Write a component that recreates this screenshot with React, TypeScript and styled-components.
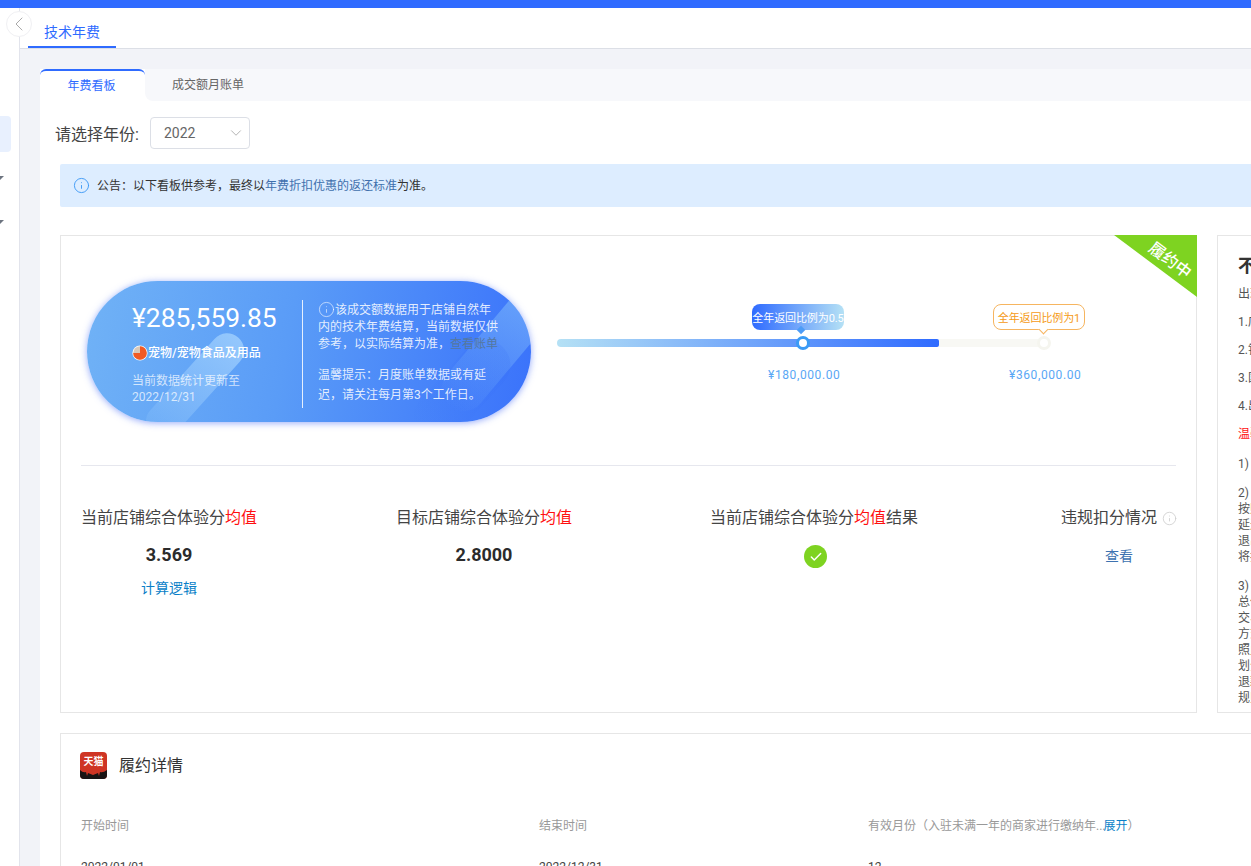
import * as React from "react"
import styled, { createGlobalStyle } from "styled-components"
import { Check, ChevronDown, ChevronLeft, Info } from "lucide-react"

const GlobalStyle = createGlobalStyle`
    html, body {
        margin: 0;
        padding: 0;
        background: #fff;
    }

    body {
        font-family: Roboto, "Noto Sans CJK SC", sans-serif;
        font-size: 12px;
        color: #333;
    }

    * {
        box-sizing: border-box;
    }
`

const Page = styled.div`
    position: relative;
    display: flex;
    flex-direction: column;
    width: 1251px;
    height: 866px;
    overflow: hidden;
`

const TopBar = styled.div`
    flex: none;
    height: 8px;
    background: #2f6bff;
`

const Body = styled.div`
    flex: 1;
    display: flex;
    min-height: 0;
`

const Sidebar = styled.aside`
    flex: none;
    display: flex;
    flex-direction: column;
    width: 20px;
    padding-top: 108px;
    background: #fff;
    border-right: 1px solid #e2e4ec;
    overflow: hidden;
`

const SideActive = styled.div`
    width: 11px;
    height: 36px;
    background: #e8f0fe;
    border-radius: 0 4px 4px 0;
`

const SideCaret = styled.div`
    width: 0;
    height: 0;
    margin-top: 24px;
    margin-bottom: 16px;
    margin-left: -4px;
    border-left: 4px solid transparent;
    border-right: 4px solid transparent;
    border-top: 4px solid #6d7480;
`

const CollapseButton = styled.button`
    position: absolute;
    left: 6px;
    top: 11px;
    display: flex;
    align-items: center;
    justify-content: center;
    width: 26px;
    height: 26px;
    padding: 0;
    background: #fff;
    border: 1px solid #f0f0f3;
    border-radius: 50%;
    color: #aaa;
`

const Main = styled.main`
    flex: 1;
    display: flex;
    flex-direction: column;
    min-width: 0;
    overflow: hidden;
`

const TabBar = styled.div`
    flex: none;
    height: 41px;
    padding-left: 8px;
    background: #fff;
    border-bottom: 1px solid #dcdfe6;
`

const PageTab = styled.div`
    width: 88px;
    height: 40px;
    padding: 15px 0 0 16px;
    font-size: 14px;
    line-height: 18px;
    color: #2f6bff;
    border-bottom: 2px solid #2f6bff;
`

const Content = styled.div`
    flex: 1;
    padding: 20px 0 0 20px;
    background: #f2f3f8;
    overflow: hidden;
`

const Panel = styled.div`
    width: 1500px;
    min-height: 900px;
    background: #fff;
`

const TabsRow = styled.div`
    display: flex;
    height: 32px;
`

const ActiveTab = styled.div`
    flex: none;
    width: 105px;
    padding-right: 2px;
    line-height: 30px;
    text-align: center;
    color: #2f6bff;
    background: #fff;
    border-top: 2px solid #2f6bff;
    border-radius: 6px 6px 0 0;
`

const RestTabs = styled.div`
    flex: 1;
    padding-left: 27px;
    line-height: 33px;
    color: #666;
    background: #f7f8fb;
    border-bottom-left-radius: 8px;
`

const FilterRow = styled.div`
    display: flex;
    align-items: center;
    gap: 11px;
    height: 32px;
    margin: 16px 0 15px 15px;
`

const FilterLabel = styled.label`
    font-size: 16px;
    color: #444;
`

const SelectBox = styled.div`
    display: flex;
    align-items: center;
    justify-content: space-between;
    width: 100px;
    height: 32px;
    padding: 0 4px 0 13px;
    font-size: 14px;
    color: #666;
    border: 1px solid #dcdfe6;
    border-radius: 4px;
`

const Notice = styled.div`
    display: flex;
    align-items: center;
    gap: 7px;
    height: 43px;
    margin-left: 20px;
    padding: 0 0 1px 13px;
    color: #333;
    background: #ddedff;
    border-radius: 2px;
`

const NoticeText = styled.span`
    margin-bottom: 2px;
`

const NoticeLink = styled.span`
    color: #3f70ad;
`

const Cards = styled.div`
    display: flex;
    gap: 20px;
    height: 478px;
    margin: 28px 0 20px 20px;
`

const Card = styled.section`
    position: relative;
    border: 1px solid #e6e6e6;
    background: #fff;
`

const OverviewCard = styled(Card)`
    flex: none;
    width: 1137px;
`

const Ribbon = styled.div`
    position: absolute;
    top: -1px;
    right: -1px;
    display: flex;
    align-items: center;
    justify-content: center;
    width: 83px;
    height: 62px;
    padding: 0 0 15px 31px;
    background: #7ed321;
    clip-path: polygon(0 0, 100% 0, 100% 100%);
`

const RibbonText = styled.span`
    font-size: 16px;
    font-weight: 500;
    color: #fff;
    white-space: nowrap;
    transform: rotate(37deg);
`

const Hero = styled.div`
    display: flex;
    align-items: flex-start;
    margin: 0 20px;
    padding: 45px 0 43px 6px;
    border-bottom: 1px solid #e6e7ee;
`

const Pill = styled.div`
    position: relative;
    flex: none;
    display: flex;
    width: 444px;
    height: 141px;
    padding: 19px 31px 14px 45px;
    color: #fff;
    background: linear-gradient(100deg, #70b2f6 0%, #5a9cf7 45%, #3a72fb 100%);
    border-radius: 71px;
    box-shadow: 0 1px 7px rgba(62, 100, 245, 0.55);
`

const PillArt = styled.div`
    position: absolute;
    inset: 0;
    border-radius: 71px;
    overflow: hidden;
`

const Stripe = styled.div<{ $x: number; $y: number; $len: number; $wide: number; $angle: number; $from: string; $to: string }>`
    position: absolute;
    left: ${p => p.$x}px;
    top: ${p => p.$y}px;
    width: ${p => p.$wide}px;
    height: ${p => p.$len}px;
    background: linear-gradient(180deg, ${p => p.$from}, ${p => p.$to});
    border-radius: ${p => p.$wide / 2}px;
    transform: rotate(${p => p.$angle}deg);
`

const PillLeft = styled.div`
    position: relative;
    flex: none;
    width: 170px;
`

const Amount = styled.div`
    font-size: 26.4px;
    line-height: 36px;
    white-space: nowrap;
`

const Category = styled.div`
    display: flex;
    align-items: center;
    margin-top: 8px;
    font-weight: 500;
    line-height: 18px;
    white-space: nowrap;
`

const UpdateNote = styled.div`
    width: 116px;
    margin-top: 11px;
    line-height: 16px;
    color: rgba(255, 255, 255, 0.72);
`

const PillDivider = styled.div`
    position: relative;
    flex: none;
    width: 1px;
    height: 108px;
    background: rgba(255, 255, 255, 0.85);
`

const PillRight = styled.div`
    position: relative;
    flex: 1;
    margin: 1px 0 0 15px;
    line-height: 17px;
    color: rgba(255, 255, 255, 0.85);
`

const InlineIcon = styled.span`
    display: inline-flex;
    vertical-align: -4px;
    color: rgba(255, 255, 255, 0.7);
`

const BillLink = styled.span`
    color: #55789f;
`

const Hint = styled.p`
    margin: 12px 0 0;
    line-height: 20px;
`

const SliderBlock = styled.div`
    position: relative;
    flex: none;
    width: 528px;
    height: 100px;
    margin: 23px 0 0 25px;
`

const Track = styled.div`
    display: flex;
    width: 487px;
    height: 8px;
    margin: 35px 0 0 1px;
`

const TrackFill = styled.div`
    flex: none;
    width: 382px;
    background: linear-gradient(90deg, #b5e1f5, #2f6bff);
    border-radius: 4px 2px 2px 4px;
`

const TrackRest = styled.div`
    flex: 1;
    background: #f8f8f4;
`

const Mark = styled.div<{ $at: number }>`
    position: absolute;
    top: 0;
    left: ${p => p.$at}px;
    width: 0;
`

const Tip = styled.div<{ $done?: boolean }>`
    position: absolute;
    top: 0;
    left: -51px;
    display: flex;
    align-items: center;
    justify-content: center;
    width: 92px;
    height: 26px;
    font-size: 11px;
    letter-spacing: -0.1px;
    white-space: nowrap;
    border-radius: 8px;
    color: ${p => (p.$done ? "#fff" : "#f59a16")};
    background: ${p => (p.$done ? "linear-gradient(90deg, #2f6bff, #b5e1f5)" : "#fff")};
    border: ${p => (p.$done ? "none" : "1px solid #f6b560")};

    &::after {
        content: "";
        position: absolute;
        left: 46px;
        bottom: ${p => (p.$done ? "-3px" : "-4px")};
        width: 6px;
        height: 6px;
        background: ${p => (p.$done ? "#4d9cf6" : "#fff")};
        border-right: ${p => (p.$done ? "none" : "1px solid #f6b560")};
        border-bottom: ${p => (p.$done ? "none" : "1px solid #f6b560")};
        transform: rotate(45deg);
    }
`

const Knob = styled.div<{ $done?: boolean }>`
    position: absolute;
    top: 32px;
    left: -7px;
    width: 14px;
    height: 14px;
    background: #fff;
    border: 3px solid ${p => (p.$done ? "#3a9bf5" : "#f5f5ef")};
    border-radius: 50%;
`

const MarkValue = styled.div`
    position: absolute;
    top: 63px;
    left: -35px;
    line-height: 16px;
    letter-spacing: 0.6px;
    color: #5aa7f5;
    white-space: nowrap;
`

const Metrics = styled.div`
    display: grid;
    grid-template-columns: 315px 314px 351px auto;
    margin: 0 20px;
    padding-top: 40px;
`

const Metric = styled.div`
    display: inline-flex;
    flex-direction: column;
    align-items: center;
    justify-self: start;
`

const MetricTitle = styled.div`
    display: flex;
    align-items: center;
    gap: 5px;
    font-size: 16px;
    line-height: 24px;
    color: #444;
    white-space: nowrap;
`

const Red = styled.span`
    color: #ff1010;
`

const MetricValue = styled.div`
    margin-top: 13px;
    font-size: 18px;
    font-weight: 700;
    line-height: 24px;
    color: #2b2b2b;
`

const MetricLink = styled.a<{ $muted?: boolean }>`
    margin-top: ${p => (p.$muted ? "15px" : "10px")};
    font-size: 14px;
    line-height: 22px;
    color: ${p => (p.$muted ? "#3d72b0" : "#0a7fc8")};
`

const OkMark = styled.div`
    display: flex;
    align-items: center;
    justify-content: center;
    width: 23px;
    height: 23px;
    margin: 15px 0 0 3px;
    color: #fff;
    background: #7ed321;
    border-radius: 50%;
`

const RulesCard = styled(Card)`
    flex: 1;
    padding: 18px 20px;
    overflow: hidden;
`

const RulesTitle = styled.h3`
    margin: 0 0 8px;
    font-size: 18px;
    font-weight: 700;
    line-height: 24px;
    color: #333;
`

const RuleText = styled.p`
    margin: 0 0 12px;
    line-height: 16px;
    color: #555;
`

const WarnText = styled(RuleText)`
    margin: 2px 0 14px;
    color: #ff1010;
`

const NoteText = styled(RuleText)`
    margin-bottom: 13px;
    white-space: pre-line;
`

const DetailCard = styled(Card)`
    margin-left: 20px;
    padding: 18px 19px;
    height: 200px;
`

const DetailHead = styled.div`
    display: flex;
    align-items: center;
    gap: 12px;
    height: 27px;
`

const DetailTitle = styled.div`
    padding-bottom: 3px;
    font-size: 16px;
    color: #333;
`

const TmallLogo = styled.div`
    flex: none;
    position: relative;
    width: 27px;
    height: 27px;
    padding-top: 3px;
    font-size: 10px;
    font-weight: 700;
    line-height: 13px;
    text-align: center;
    white-space: nowrap;
    color: #fff;
    background: #cf3524;
    border-radius: 4px;
    overflow: hidden;
`

const LogoFoot = styled.svg`
    position: absolute;
    left: 0;
    bottom: 0;
    display: block;
`

const DetailGrid = styled.div`
    display: grid;
    grid-template-columns: 458px 329px 1fr;
    row-gap: 29px;
    margin: 41px 0 0 1px;
    line-height: 12px;
`

const DetailLabel = styled.div`
    color: #999;
`

const DetailValue = styled.div`
    color: #444;
`

const DetailLink = styled.span`
    margin-left: -2px;
    color: #0a7fc8;
`

const rules = [
    "出现以下情形的，技术年费不予返还：",
    "1.店铺因违规被清退的；",
    "2.银行账户信息有误的；",
    "3.国家法律法规另有规定的；",
    "4.出现其他不符合规则的情形。"
]

const notes = [
    "1) 年费返还将于次年统一结算。",
    "2) 年费结算时间\n按照自然年度进行计算，\n延迟结算的情况请以通知为准，\n退出经营的商家\n将按规则结算。",
    "3) 年费折扣优惠\n总体比例按成交额计算，\n交易额不含退款部分，\n方式参考规则，\n照此执行，\n划分类目后，\n退款金额扣除，\n规则以公告为准。"
]

const PieIcon = () => (
    <svg width="16" height="16" viewBox="0 0 16 16">
        <circle cx="8" cy="8" r="7.6" fill="#fff" />
        <circle cx="8" cy="8" r="6.8" fill="#d9c8b8" />
        <path d="M8 1.2A6.8 6.8 0 1 1 1.2 8H8z" fill="#f15a24" />
    </svg>
)

export default function App() {
    return (
        <Page>
            <GlobalStyle />
            <TopBar />
            <Body>
                <Sidebar>
                    <SideActive />
                    <SideCaret />
                    <SideCaret />
                </Sidebar>
                <Main>
                    <TabBar>
                        <PageTab>技术年费</PageTab>
                    </TabBar>
                    <Content>
                        <Panel>
                            <TabsRow>
                                <ActiveTab>年费看板</ActiveTab>
                                <RestTabs>成交额月账单</RestTabs>
                            </TabsRow>
                            <FilterRow>
                                <FilterLabel>请选择年份:</FilterLabel>
                                <SelectBox>
                                    2022
                                    <ChevronDown size={18} strokeWidth={1} color="#999" />
                                </SelectBox>
                            </FilterRow>
                            <Notice>
                                <Info size={17} strokeWidth={1.3} color="#3b97f5" />
                                <NoticeText>
                                    公告：以下看板供参考，最终以<NoticeLink>年费折扣优惠的返还标准</NoticeLink>为准。
                                </NoticeText>
                            </Notice>
                            <Cards>
                                <OverviewCard>
                                    <Ribbon>
                                        <RibbonText>履约中</RibbonText>
                                    </Ribbon>
                                    <Hero>
                                        <Pill>
                                            <PillArt>
                                                <Stripe $x={91} $y={40} $wide={34} $len={130} $angle={42} $from="rgba(170,215,255,0.7)" $to="rgba(160,210,255,0.12)" />
                                                <Stripe $x={395} $y={-25} $wide={44} $len={170} $angle={40} $from="rgba(150,210,250,0.6)" $to="rgba(150,210,250,0)" />
                                                <Stripe $x={350} $y={50} $wide={50} $len={120} $angle={42} $from="rgba(45,100,245,0.12)" $to="rgba(45,100,245,0)" />
                                            </PillArt>
                                            <PillLeft>
                                                <Amount>¥285,559.85</Amount>
                                                <Category>
                                                    <PieIcon />
                                                    宠物/宠物食品及用品
                                                </Category>
                                                <UpdateNote>当前数据统计更新至2022/12/31</UpdateNote>
                                            </PillLeft>
                                            <PillDivider />
                                            <PillRight>
                                                <InlineIcon>
                                                    <Info size={17} strokeWidth={1.2} />
                                                </InlineIcon>
                                                该成交额数据用于店铺自然年内的技术年费结算，当前数据仅供参考，以实际结算为准，
                                                <BillLink>查看账单</BillLink>
                                                <Hint>温馨提示：月度账单数据或有延迟，请关注每月第3个工作日。</Hint>
                                            </PillRight>
                                        </Pill>
                                        <SliderBlock>
                                            <Track>
                                                <TrackFill />
                                                <TrackRest />
                                            </Track>
                                            <Mark $at={247}>
                                                <Tip $done>全年返回比例为0.5</Tip>
                                                <Knob $done />
                                                <MarkValue>¥180,000.00</MarkValue>
                                            </Mark>
                                            <Mark $at={488}>
                                                <Tip>全年返回比例为1</Tip>
                                                <Knob />
                                                <MarkValue>¥360,000.00</MarkValue>
                                            </Mark>
                                        </SliderBlock>
                                    </Hero>
                                    <Metrics>
                                        <Metric>
                                            <MetricTitle>
                                                <span>
                                                    当前店铺综合体验分<Red>均值</Red>
                                                </span>
                                            </MetricTitle>
                                            <MetricValue>3.569</MetricValue>
                                            <MetricLink>计算逻辑</MetricLink>
                                        </Metric>
                                        <Metric>
                                            <MetricTitle>
                                                <span>
                                                    目标店铺综合体验分<Red>均值</Red>
                                                </span>
                                            </MetricTitle>
                                            <MetricValue>2.8000</MetricValue>
                                        </Metric>
                                        <Metric>
                                            <MetricTitle>
                                                <span>
                                                    当前店铺综合体验分<Red>均值</Red>结果
                                                </span>
                                            </MetricTitle>
                                            <OkMark>
                                                <Check size={14} strokeWidth={2.5} />
                                            </OkMark>
                                        </Metric>
                                        <Metric>
                                            <MetricTitle>
                                                违规扣分情况
                                                <Info size={15} strokeWidth={1.3} color="#ccc" />
                                            </MetricTitle>
                                            <MetricLink $muted>查看</MetricLink>
                                        </Metric>
                                    </Metrics>
                                </OverviewCard>
                                <RulesCard>
                                    <RulesTitle>不予返还的情形</RulesTitle>
                                    {rules.map(text => (
                                        <RuleText key={text}>{text}</RuleText>
                                    ))}
                                    <WarnText>温馨提示：</WarnText>
                                    {notes.map(text => (
                                        <NoteText key={text}>{text}</NoteText>
                                    ))}
                                </RulesCard>
                            </Cards>
                            <DetailCard>
                                <DetailHead>
                                    <TmallLogo>
                                        天猫
                                        <LogoFoot width="27" height="10" viewBox="0 0 27 10">
                                            <path d="M0 10V1q3 3 6 2l1 4 1-3 5 2 5-2 1 3 1-4q3 1 7-2v9z" fill="#1a1414" />
                                        </LogoFoot>
                                    </TmallLogo>
                                    <DetailTitle>履约详情</DetailTitle>
                                </DetailHead>
                                <DetailGrid>
                                    <DetailLabel>开始时间</DetailLabel>
                                    <DetailLabel>结束时间</DetailLabel>
                                    <DetailLabel>
                                        有效月份（入驻未满一年的商家进行缴纳年...<DetailLink>展开</DetailLink>）
                                    </DetailLabel>
                                    <DetailValue>2022/01/01</DetailValue>
                                    <DetailValue>2022/12/31</DetailValue>
                                    <DetailValue>12</DetailValue>
                                </DetailGrid>
                            </DetailCard>
                        </Panel>
                    </Content>
                </Main>
            </Body>
            <CollapseButton>
                <ChevronLeft size={26} strokeWidth={1} />
            </CollapseButton>
        </Page>
    )
}
